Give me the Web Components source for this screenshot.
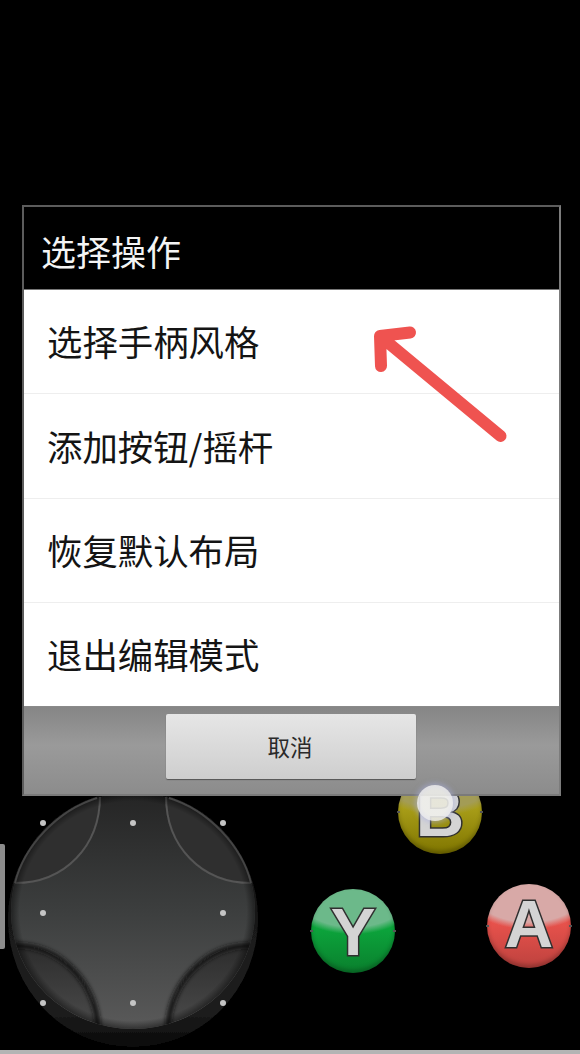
<!DOCTYPE html>
<html lang="zh">
<head>
<meta charset="utf-8">
<title>选择操作</title>
<style>
  html, body { margin: 0; background: #000; }
</style>
</head>
<body>
<game-screen>
  <action-dialog heading="选择操作" cancel="取消">
    <dialog-item>选择手柄风格</dialog-item>
    <dialog-item>添加按钮/摇杆</dialog-item>
    <dialog-item>恢复默认布局</dialog-item>
    <dialog-item last>退出编辑模式</dialog-item>
  </action-dialog>
</game-screen>

<script>
const CJK = '"Noto Sans CJK SC", "Noto Sans", sans-serif';

class GameScreen extends HTMLElement {
    constructor() {
        super();
        this.attachShadow({ mode: 'open' });
        this.shadowRoot.innerHTML = `
            <style>
                :host {
                    display: block;
                    position: relative;
                    width: 580px;
                    height: 1054px;
                    box-sizing: border-box;
                    padding: 205px 19px 0 22px;
                    background: #000;
                    overflow: hidden;
                    font-family: ${CJK};
                }
                .side {
                    position: absolute;
                    left: 0;
                    top: 844px;
                    width: 5px;
                    height: 105px;
                    background: #8c8c8c;
                    border-radius: 0 2px 2px 0;
                }
                .floor {
                    position: absolute;
                    left: 0;
                    right: 0;
                    bottom: 0;
                    height: 4px;
                    background: #b4b4b4;
                }
                .touch {
                    position: absolute;
                    left: 417px;
                    top: 785px;
                    width: 36px;
                    height: 36px;
                    border-radius: 50%;
                    background: radial-gradient(circle at 50% 50%, rgba(240,240,236,.88) 0 50%, rgba(232,232,238,.9) 72%, rgba(214,216,236,.7) 100%);
                    box-shadow: 0 0 5px 2px rgba(170,175,225,.5);
                    z-index: 3;
                }
                ::slotted(action-dialog) { position: relative; z-index: 2; }
            </style>
            <d-pad></d-pad>
            <face-button label="B" tone="yellow" style="left:398px;top:770px"></face-button>
            <face-button label="Y" tone="green" style="left:311px;top:889px"></face-button>
            <face-button label="A" tone="red" lift style="left:487px;top:884px"></face-button>
            <div class="side"></div>
            <div class="floor"></div>
            <slot></slot>
            <div class="touch"></div>
            <pointer-arrow></pointer-arrow>
        `;
    }
}

class ActionDialog extends HTMLElement {
    constructor() {
        super();
        this.attachShadow({ mode: 'open' });
        this.shadowRoot.innerHTML = `
            <style>
                :host {
                    display: flex;
                    flex-direction: column;
                    height: 591px;
                    box-sizing: border-box;
                    border: 2px solid #5c5c5c;
                    border-right-color: #7c7c7c;
                    border-bottom-color: #7a7a7a;
                    background: #000;
                }
                .title {
                    height: 83px;
                    flex: none;
                    display: flex;
                    align-items: center;
                    padding: 5px 0 0 17px;
                    color: #f4f4f4;
                    font-size: 35px;
                    line-height: 1;
                    border-bottom: 1px solid #777;
                    box-sizing: border-box;
                }
                .list {
                    flex: none;
                    height: 416px;
                    display: flex;
                    flex-direction: column;
                    background: #fff;
                }
                .bar {
                    flex: 1;
                    display: flex;
                    justify-content: center;
                    padding: 8px 2px 0 0;
                    box-sizing: border-box;
                    background: linear-gradient(#858585, #9a9a9a 45%, #8c8c8c);
                    box-shadow: inset 0 1px 0 #8a8a8a;
                }
                button {
                    width: 250px;
                    height: 65px;
                    margin: 0;
                    padding: 0 1px 1px 0;
                    border: 0;
                    border-radius: 2px;
                    background: linear-gradient(#e6e6e6, #cecece);
                    box-shadow: 0 1px 1px #555;
                    color: #2a2a2a;
                    font: 22.5px/1 ${CJK};
                }
            </style>
            <div class="title"></div>
            <div class="list"><slot></slot></div>
            <div class="bar"><button></button></div>
        `;
        this.shadowRoot.querySelector('.title').textContent = this.getAttribute('heading');
        this.shadowRoot.querySelector('button').textContent = this.getAttribute('cancel');
    }
}

class DialogItem extends HTMLElement {
    constructor() {
        super();
        this.attachShadow({ mode: 'open' });
        this.shadowRoot.innerHTML = `
            <style>
                :host {
                    flex: 1;
                    display: flex;
                    align-items: center;
                    padding: 0 0 1px 23px;
                    box-sizing: border-box;
                    border-bottom: 1px solid #eeeeee;
                    color: #141414;
                    font-size: 35.4px;
                    line-height: 1;
                }
                :host([last]) { border-bottom: 0; }
            </style>
            <slot></slot>
        `;
    }
}

class DPad extends HTMLElement {
    constructor() {
        super();
        this.attachShadow({ mode: 'open' });
        // eight marks round the stick, none in the middle
        const dots = [];
        [43, 133, 223].forEach(x => [43, 133, 223].forEach(y => {
            if (x === 133 && y === 133) return;
            dots.push(`<circle cx="${x}" cy="${y}" r="3" fill="#c4c4c4" filter="url(#soft)"/>`);
        }));
        this.shadowRoot.innerHTML = `
            <style>
                :host {
                    display: block;
                    position: absolute;
                    left: 0;
                    top: 780px;
                    width: 270px;
                    height: 274px;
                }
                svg { display: block; }
            </style>
            <svg width="270" height="274" viewBox="0 0 270 274">
                <defs>
                    <linearGradient id="body" x1="0" y1="0" x2="0" y2="1">
                        <stop offset="0" stop-color="#242424"/>
                        <stop offset=".5" stop-color="#3c3e3e"/>
                        <stop offset="1" stop-color="#5a5a5a"/>
                    </linearGradient>
                    <linearGradient id="low" x1="0" y1="0" x2="0" y2="1">
                        <stop offset="0" stop-color="#2c2c2c"/>
                        <stop offset="1" stop-color="#4c4c4c"/>
                    </linearGradient>
                    <radialGradient id="edge">
                        <stop offset=".93" stop-color="#000" stop-opacity="0"/>
                        <stop offset="1" stop-color="#000" stop-opacity=".45"/>
                    </radialGradient>
                    <linearGradient id="rim" x1="0" y1="0" x2="0" y2="1">
                        <stop offset="0" stop-color="#111"/>
                        <stop offset=".85" stop-color="#1e1e1e"/>
                        <stop offset="1" stop-color="#0a0a0a"/>
                    </linearGradient>
                    <filter id="soft" x="-50%" y="-50%" width="200%" height="200%"><feGaussianBlur stdDeviation=".7"/></filter>
                    <filter id="shade" x="-30%" y="-30%" width="160%" height="160%"><feGaussianBlur stdDeviation="2"/></filter>
                    <clipPath id="disc"><ellipse cx="133" cy="131" rx="122" ry="118"/></clipPath>
                </defs>
                <ellipse cx="133" cy="139" rx="125" ry="128" fill="url(#rim)" filter="url(#soft)"/>
                <g clip-path="url(#disc)">
                    <rect x="8" y="10" width="252" height="240" fill="url(#body)"/>
                    <path d="M15 103C65 103 100 66 100 16L40 16 10 60Z" fill="#2f2f2f"/>
                    <path d="M251 103C201 103 166 66 166 16L226 16 256 60Z" fill="#2f2f2f"/>
                    <path d="M14 165C62 165 98 205 98 250L40 250 8 200Z" fill="url(#low)"/>
                    <path d="M252 165C204 165 168 205 168 250L226 250 258 200Z" fill="url(#low)"/>
                    <path d="M15 103C65 103 100 66 100 16" fill="none" stroke="#545454" stroke-width="2" filter="url(#soft)"/>
                    <path d="M251 103C201 103 166 66 166 16" fill="none" stroke="#545454" stroke-width="2" filter="url(#soft)"/>
                    <path d="M14 165C62 165 98 205 98 250" fill="none" stroke="#161616" stroke-width="5" filter="url(#shade)"/>
                    <path d="M252 165C204 165 168 205 168 250" fill="none" stroke="#161616" stroke-width="5" filter="url(#shade)"/>
                    <ellipse cx="133" cy="131" rx="122" ry="118" fill="url(#edge)"/>
                </g>
                <path d="M15 103C24 66 58 30 97 18" fill="none" stroke="#444" stroke-width="2" filter="url(#soft)"/>
                <path d="M251 103C242 66 208 30 169 18" fill="none" stroke="#444" stroke-width="2" filter="url(#soft)"/>
                ${dots.join('')}
            </svg>
        `;
    }
}

class FaceButton extends HTMLElement {
    constructor() {
        super();
        this.attachShadow({ mode: 'open' });
        const tones = {
            yellow: ['#a39c56', '#a89d18', '#7f7500'],
            green: ['#6cb98a', '#0ca53c', '#0a7f2d'],
            red: ['#d8a9a7', '#e8524c', '#bd423e']
        };
        const t = tones[this.getAttribute('tone')];
        this.shadowRoot.innerHTML = `
            <style>
                :host {
                    display: block;
                    position: absolute;
                    width: 84px;
                    height: 84px;
                }
                :host([lift]) .ball { padding-bottom: 6px; box-sizing: border-box; }
                .ball {
                    position: relative;
                    width: 100%;
                    height: 100%;
                    border-radius: 50%;
                    display: flex;
                    align-items: center;
                    justify-content: center;
                    background:
                        radial-gradient(ellipse 85% 54% at 50% 0, ${t[0]} 0 84%, transparent 100%),
                        linear-gradient(${t[1]} 45%, ${t[2]} 100%);
                    box-shadow: inset 0 -3px 4px rgba(0,0,0,.25);
                    color: #d4d4d4;
                    font: bold 67px/1 "Liberation Sans", sans-serif;
                    -webkit-text-stroke: 3px #303030;
                    paint-order: stroke fill;
                }
                .tick {
                    position: absolute;
                    width: 3px;
                    height: 2px;
                    background: #555;
                    top: 41px;
                }
                .l { left: -1px; }
                .r { right: -1px; }
            </style>
            <div class="ball"></div>
            <i class="tick l"></i><i class="tick r"></i>
        `;
        this.shadowRoot.querySelector('.ball').textContent = this.getAttribute('label');
    }
}

class PointerArrow extends HTMLElement {
    constructor() {
        super();
        this.attachShadow({ mode: 'open' });
        this.shadowRoot.innerHTML = `
            <style>
                :host {
                    display: block;
                    position: absolute;
                    left: 360px;
                    top: 315px;
                    z-index: 4;
                    width: 160px;
                    height: 135px;
                }
                svg { display: block; }
            </style>
            <svg width="160" height="135" viewBox="360 315 160 135">
                <path d="M500.5 436L380 336M380 336L410 332.5M380 336L381 366"
                      fill="none" stroke="#ef5350" stroke-width="12" stroke-linecap="round" stroke-linejoin="round"/>
            </svg>
        `;
    }
}

customElements.define('game-screen', GameScreen);
customElements.define('action-dialog', ActionDialog);
customElements.define('dialog-item', DialogItem);
customElements.define('d-pad', DPad);
customElements.define('face-button', FaceButton);
customElements.define('pointer-arrow', PointerArrow);
</script>
</body>
</html>
